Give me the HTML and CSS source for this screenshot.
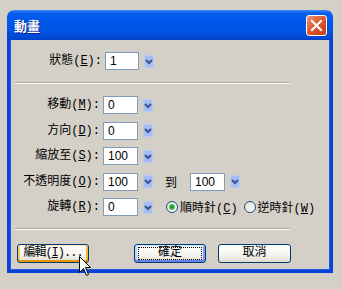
FILE: index.html
```html
<!DOCTYPE html>
<html lang="zh-Hant">
<head>
    <meta charset="UTF-8">
    <title>動畫</title>
    <link rel="stylesheet" href="styles.css">
</head>
<body>

    <div class="window">
        <div class="titlebar">
            <span class="title">動畫</span>
            <span class="close">
                <svg width="13" height="13" viewBox="0 0 13 13"><path d="M2 2 L11 11 M11 2 L2 11" stroke="#fff" stroke-width="2.2" stroke-linecap="square"/></svg>
            </span>
        </div>

        <div class="body">
            <div class="row row-state">
                <span class="label">狀態(<u>E</u>):</span>
                <span class="input">1</span>
                <span class="arrow"><svg width="10" height="13" viewBox="0 0 10 13"><path d="M2 5 L5 8 L8 5" fill="none" stroke="#3b5796" stroke-width="2.2"/></svg></span>
            </div>

            <div class="sep"></div>

            <div class="fields">
                <div class="row">
                    <span class="label">移動(<u>M</u>):</span>
                    <span class="input">0</span>
                    <span class="arrow"><svg width="10" height="13" viewBox="0 0 10 13"><path d="M2 5 L5 8 L8 5" fill="none" stroke="#3b5796" stroke-width="2.2"/></svg></span>
                </div>
                <div class="row">
                    <span class="label">方向(<u>D</u>):</span>
                    <span class="input">0</span>
                    <span class="arrow"><svg width="10" height="13" viewBox="0 0 10 13"><path d="M2 5 L5 8 L8 5" fill="none" stroke="#3b5796" stroke-width="2.2"/></svg></span>
                </div>
                <div class="row">
                    <span class="label">縮放至(<u>S</u>):</span>
                    <span class="input">100</span>
                    <span class="arrow"><svg width="10" height="13" viewBox="0 0 10 13"><path d="M2 5 L5 8 L8 5" fill="none" stroke="#3b5796" stroke-width="2.2"/></svg></span>
                </div>
                <div class="row">
                    <span class="label">不透明度(<u>O</u>):</span>
                    <span class="input">100</span>
                    <span class="arrow"><svg width="10" height="13" viewBox="0 0 10 13"><path d="M2 5 L5 8 L8 5" fill="none" stroke="#3b5796" stroke-width="2.2"/></svg></span>
                    <span class="to">到</span>
                    <span class="input">100</span>
                    <span class="arrow"><svg width="10" height="13" viewBox="0 0 10 13"><path d="M2 5 L5 8 L8 5" fill="none" stroke="#3b5796" stroke-width="2.2"/></svg></span>
                </div>
                <div class="row">
                    <span class="label">旋轉(<u>R</u>):</span>
                    <span class="input">0</span>
                    <span class="arrow"><svg width="10" height="13" viewBox="0 0 10 13"><path d="M2 5 L5 8 L8 5" fill="none" stroke="#3b5796" stroke-width="2.2"/></svg></span>
                    <span class="radio checked"></span>
                    <span class="radio-text">順時針(<u>C</u>)</span>
                    <span class="radio"></span>
                    <span class="radio-text">逆時針(<u>W</u>)</span>
                </div>
            </div>

            <div class="sep sep-bottom"></div>

            <div class="buttons">
                <span class="btn btn-hover">編輯(<u>I</u>)...</span>
                <span class="btn btn-ok"><span class="focus">確定</span></span>
                <span class="btn btn-cancel">取消</span>
            </div>
        </div>
    </div>

    <svg class="cursor" width="13" height="21" viewBox="0 0 13 21">
        <path d="M0.5 0.5 L0.5 16.5 L4.5 12.5 L7.5 19.5 L9.5 18.5 L6.5 11.5 L11.5 11.5 Z" fill="#fff" stroke="#000" stroke-width="1"/>
    </svg>

</body>
</html>
```

FILE: styles.css
```css
* {
    margin: 0;
    padding: 0;
    box-sizing: border-box;
}

body {
    background: #d4d0c8;
    font-family: "Liberation Mono", "Noto Sans CJK TC", monospace;
    font-size: 12px;
    color: #000;
    position: relative;
    width: 342px;
    height: 289px;
    overflow: hidden;
}

.window {
    margin: 10px 0 0 7px;
    width: 326px;
    height: 263px;
}

.titlebar {
    height: 30px;
    border-radius: 7px 7px 0 0;
    background: linear-gradient(to bottom, #3d8cf7 0px, #0a5eea 3px, #0058ee 8px, #0054e3 20px, #004ad6 27px, #003fc4 30px);
    display: flex;
    align-items: center;
    padding: 0 6px 0 7px;
}

.title {
    color: #fff;
    font-family: "Noto Sans CJK TC", sans-serif;
    font-weight: bold;
    font-size: 13px;
    text-shadow: 1px 1px 0 #0a1f8c;
    flex: 1;
    padding-top: 1px;
}

.close {
    width: 21px;
    height: 21px;
    border: 1px solid #fff;
    border-radius: 3px;
    background: linear-gradient(135deg, #ec9a7c 0%, #e05a2e 45%, #c63c14 100%);
    display: flex;
    align-items: center;
    justify-content: center;
}

.body {
    height: 233px;
    background: #d4d0c8;
    border: 3px solid #0842d6;
    border-top: none;
    box-shadow: inset 1px 0 0 #1a5ee8, inset -1px 0 0 #1a5ee8, inset 0 -1px 0 #1a5ee8;
    padding-top: 12px;
}

.row {
    display: flex;
    align-items: center;
    height: 18px;
}

.label {
    width: 90px;
    text-align: right;
    margin-right: 3px;
    white-space: nowrap;
    line-height: 18px;
}

.row-state .label {
    width: 92px;
}

.input {
    width: 35px;
    height: 18px;
    background: #fff;
    border: 1px solid #7f9db9;
    font-family: "Liberation Sans", sans-serif;
    font-size: 12px;
    line-height: 16px;
    padding-left: 4px;
}

.row-state .input {
    width: 34px;
}

.arrow {
    width: 10px;
    height: 13px;
    margin-left: 5px;
    background: #a8bdf0;
    border: 1px solid #b9caf5;
    border-radius: 1px;
    display: flex;
    align-items: center;
    justify-content: center;
}

.arrow svg {
    flex: none;
}

.to {
    margin-left: 12px;
    margin-right: 13px;
    width: 12px;
}

.radio {
    width: 12px;
    height: 12px;
    border: 1px solid #1c5180;
    border-radius: 50%;
    background: linear-gradient(135deg, #dcdcd5, #fff);
    margin-left: 13px;
    display: flex;
    align-items: center;
    justify-content: center;
}

.radio.checked::after {
    content: "";
    width: 4px;
    height: 4px;
    border-radius: 50%;
    background: #21a121;
    box-shadow: 0 0 0 1px #5bc95b;
}

.radio-text {
    margin-left: 2px;
    white-space: nowrap;
}

.radio-text + .radio {
    margin-left: 6px;
}

.sep {
    margin: 12px 0 0 5px;
    width: 275px;
    height: 2px;
    border-top: 1px solid #aca899;
    border-bottom: 1px solid #fff;
}

.fields {
    margin-top: 12px;
    display: flex;
    flex-direction: column;
    gap: 7.5px;
}

.sep-bottom {
    margin-top: 12px;
}

.buttons {
    display: flex;
    margin-top: 14px;
    padding-left: 7px;
}

.btn {
    width: 72px;
    height: 19px;
    border: 1px solid #003c74;
    border-radius: 3px;
    background: linear-gradient(to bottom, #fff 0%, #f4f3ee 60%, #dedbd0 100%);
    display: flex;
    align-items: center;
    justify-content: center;
    line-height: 15px;
    white-space: nowrap;
}

.btn-hover {
    letter-spacing: -1px;
    box-shadow: inset 0 1px 0 #ffeac1, inset 0 -2px 0 #e59700, inset 2px 0 0 #fbca5c, inset -2px 0 0 #f8b330;
}

.btn-ok {
    margin-left: 45px;
    box-shadow: inset 0 1px 0 #cee7ff, inset 0 -2px 0 #6982ee, inset 2px 0 0 #b8d4fa, inset -2px 0 0 #7d99f1;
}

.focus {
    width: 64px;
    height: 13px;
    border: 1px dotted #000;
    text-align: center;
    line-height: 11px;
}

.btn-cancel {
    margin-left: 12px;
    width: 73px;
}

.cursor {
    position: absolute;
    left: 79px;
    top: 256px;
}
```
